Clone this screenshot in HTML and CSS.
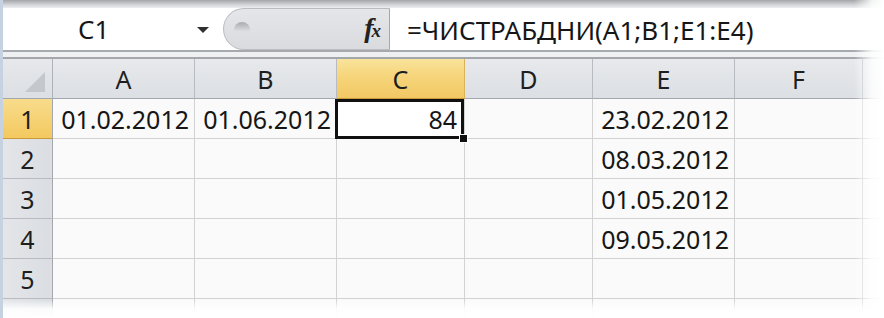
FILE: index.html
```html
<!DOCTYPE html>
<html>
<head>
	<meta charset="UTF-8">
	<title>ЧИСТРАБДНИ</title>
	<link rel="stylesheet" href="styles.css">
</head>
<body>
	<div class="window">
		<div class="frame-top"></div>
		<div class="formula-bar">
			<div class="name-box">
				<span class="name">C1</span>
				<span class="drop"></span>
			</div>
			<div class="pill">
				<span class="grip"></span>
				<span class="fx">f<i>x</i></span>
			</div>
			<div class="formula">=ЧИСТРАБДНИ(A1;B1;E1:E4)</div>
		</div>
		<div class="splitter"></div>
		<div class="sheet">
			<div class="corner"><span></span></div>
			<div class="col-head">A</div>
			<div class="col-head">B</div>
			<div class="col-head on">C</div>
			<div class="col-head">D</div>
			<div class="col-head">E</div>
			<div class="col-head">F</div>
			<div class="col-head last"></div>

			<div class="row-head on">1</div>
			<div class="cell">01.02.2012</div>
			<div class="cell">01.06.2012</div>
			<div class="cell sel">84</div>
			<div class="cell"></div>
			<div class="cell">23.02.2012</div>
			<div class="cell"></div>
			<div class="cell last"></div>

			<div class="row-head">2</div>
			<div class="cell"></div>
			<div class="cell"></div>
			<div class="cell"></div>
			<div class="cell"></div>
			<div class="cell">08.03.2012</div>
			<div class="cell"></div>
			<div class="cell last"></div>

			<div class="row-head">3</div>
			<div class="cell"></div>
			<div class="cell"></div>
			<div class="cell"></div>
			<div class="cell"></div>
			<div class="cell">01.05.2012</div>
			<div class="cell"></div>
			<div class="cell last"></div>

			<div class="row-head">4</div>
			<div class="cell"></div>
			<div class="cell"></div>
			<div class="cell"></div>
			<div class="cell"></div>
			<div class="cell">09.05.2012</div>
			<div class="cell"></div>
			<div class="cell last"></div>

			<div class="row-head">5</div>
			<div class="cell"></div>
			<div class="cell"></div>
			<div class="cell"></div>
			<div class="cell"></div>
			<div class="cell"></div>
			<div class="cell"></div>
			<div class="cell last"></div>

			<div class="row-head"></div>
			<div class="cell"></div>
			<div class="cell"></div>
			<div class="cell"></div>
			<div class="cell"></div>
			<div class="cell"></div>
			<div class="cell"></div>
			<div class="cell last"></div>
		</div>
		<!-- размытый край справа и снизу -->
		<div class="fade-right"></div>
		<div class="fade-bottom"></div>
	</div>
</body>
</html>
```

FILE: styles.css
```css
*{margin: 0;padding: 0;box-sizing: border-box;}
body{background: #FFFFFF;font-family: "Noto Sans", "Open Sans", sans-serif;color: #161616;}
.window{width: 884px;height: 318px;overflow: hidden;position: relative;background: #FFFFFF;border-left: 3px solid #c7d2e0;}

.frame-top{height: 8px;background: linear-gradient(#a3a5a8, #d2d4d7 60%, #eceef0);}

.formula-bar{display: flex;height: 42px;background: #FFFFFF;}
.formula-bar .name-box{width: 220px;display: flex;align-items: center;position: relative;padding-left: 75px;}
.formula-bar .name{font-size: 26px;line-height: 42px;}
.formula-bar .drop{position: absolute;left: 194px;top: 19px;width: 0;height: 0;border-left: 6px solid transparent;border-right: 6px solid transparent;border-top: 6px solid #303030;}
.formula-bar .pill{width: 167px;height: 42px;background: linear-gradient(#e4e6e9, #d9dbde);border: 1px solid #b9bcc0;border-right-color: #a4a7ab;border-radius: 21px 0 0 21px;position: relative;}
.formula-bar .grip{position: absolute;left: 10px;top: 13px;width: 16px;height: 10px;border-radius: 8px 8px 2px 2px;background: linear-gradient(#a9abae, #cfd1d4 70%, #e0e2e5);}
.formula-bar .fx{position: absolute;right: 10px;top: 3px;font-family: "Liberation Serif", serif;font-style: italic;font-weight: bold;font-size: 28px;color: #222;letter-spacing: -2px;}
.formula-bar .fx i{font-size: 19px;}
.formula-bar .formula{flex: 1;padding-left: 17px;font-size: 26px;line-height: 44px;white-space: nowrap;}

.splitter{height: 9px;border-top: 2px solid #a6a9ad;border-bottom: 2px solid #a3a7ac;background: #eef0f2;}

.sheet{display: grid;grid-template-columns: 50px 142px 142px 128px 128px 142px 128px 1fr;grid-auto-rows: 40px;font-size: 25px;}
.corner{background: linear-gradient(#e6e8eb, #dcdfe3);border-right: 1px solid #aeb3b9;border-bottom: 1px solid #a3a8ae;position: relative;}
.corner span{position: absolute;right: 7px;bottom: 6px;width: 0;height: 0;border-left: 20px solid transparent;border-bottom: 20px solid #c4c8cd;}
.col-head{background: linear-gradient(#e7e9ec, #dcdfe3);border-right: 1px solid #b8bcc2;border-bottom: 1px solid #a3a8ae;text-align: center;line-height: 40px;color: #1e1e1e;}
.col-head.on{background: linear-gradient(#f9e39c, #f6d57a 45%, #f2c864);border-right-color: #d9b25a;border-bottom-color: #c99a3a;}
.col-head.last{border-right: none;}
.row-head{background: linear-gradient(90deg, #e3e5e9, #dadde1);border-right: 1px solid #a3a8ae;border-bottom: 1px solid #b8bcc2;text-align: center;line-height: 40px;color: #1e1e1e;}
.row-head.on{background: linear-gradient(#f8dc8c, #f3c95f);border-bottom-color: #c99a3a;}
.cell{background: #fafafa;border-right: 1px solid #d2d2d2;border-bottom: 1px solid #d2d2d2;text-align: right;padding-right: 5px;line-height: 40px;white-space: nowrap;}
.cell.last{border-right: none;}
.cell.sel{background: #FFFFFF;position: relative;padding-right: 7px;}
.cell.sel::before{content: "";position: absolute;left: -2px;top: 0;right: 0;bottom: -1px;border: 3px solid #111;}
.cell.sel::after{content: "";position: absolute;right: -4px;bottom: -5px;width: 7px;height: 7px;background: #111;border: 1px solid #FFFFFF;}

.fade-right{position: absolute;right: 0;top: 0;width: 30px;height: 318px;background: linear-gradient(90deg, rgba(255,255,255,0), rgba(255,255,255,0.85) 60%, #FFFFFF);}
.fade-bottom{position: absolute;left: 0;bottom: 0;width: 884px;height: 18px;background: linear-gradient(rgba(255,255,255,0), rgba(255,255,255,0.9) 50%, #FFFFFF);}
```
